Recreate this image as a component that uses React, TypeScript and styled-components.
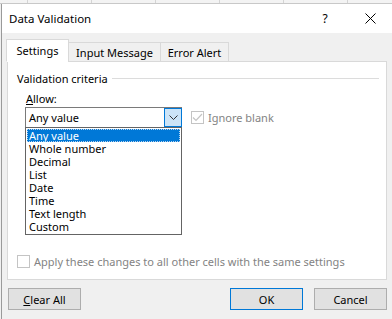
import React from 'react';
import styled, { createGlobalStyle } from 'styled-components';

const GlobalStyle = createGlobalStyle`
  html, body {
    margin: 0;
    padding: 0;
    background: #f0f0f0;
  }
  body {
    font-family: "Segoe UI", "Noto Sans", "Liberation Sans", sans-serif;
    font-size: 11px;
    color: #000;
  }
`;

const Page = styled.div`
  width: 392px;
  height: 319px;
  overflow: hidden;
  display: flex;
  flex-direction: column;
`;

const SheetStrip = styled.div`
  height: 3px;
  background: #f3f3f3;
  background-image: repeating-linear-gradient(90deg, transparent 0 27px, #d4d4d4 27px 28px, transparent 28px 64px);
  border-bottom: 1px solid #c8c8c8;
`;

const Dialog = styled.div`
  flex: 1;
  display: flex;
  flex-direction: column;
  border-left: 1px solid #9a9a9a;
  margin-left: 1px;
  background: #f0f0f0;
`;

const TitleBar = styled.div`
  height: 29px;
  background: #fff;
  display: flex;
  align-items: center;
  padding-left: 7px;
`;

const Title = styled.div`
  flex: 1;
  font-size: 11.5px;
  margin-top: -1px;
`;

const TitleButton = styled.div<{ $w: number }>`
  width: ${p => p.$w}px;
  height: 29px;
  display: flex;
  align-items: center;
  justify-content: center;
  font-size: 12px;
`;

const Body = styled.div`
  flex: 1;
  display: flex;
  flex-direction: column;
  padding: 7px 5px 0 4px;
`;

const Tabs = styled.div`
  display: flex;
  align-items: flex-end;
  height: 22px;
  position: relative;
  z-index: 1;
  margin-bottom: -1px;
`;

const Tab = styled.div<{ $active?: boolean; $w: number }>`
  width: ${p => p.$w}px;
  height: ${p => (p.$active ? 23 : 20)}px;
  display: flex;
  align-items: center;
  justify-content: center;
  background: ${p => (p.$active ? '#fff' : '#f0f0f0')};
  border: 1px solid #d9d9d9;
  border-bottom: ${p => (p.$active ? '1px solid #fff' : '1px solid #d9d9d9')};
  margin-left: ${p => (p.$active ? 0 : -1)}px;
  box-sizing: border-box;
  font-size: 11px;
`;

const Panel = styled.div`
  height: 219px;
  background: #fff;
  border: 1px solid #d9d9d9;
  box-sizing: border-box;
  margin-left: 1px;
  padding: 9px 7px 0 9px;
  display: flex;
  flex-direction: column;
  position: relative;
`;

const GroupHeader = styled.div`
  display: flex;
  align-items: center;
  gap: 4px;
  height: 14px;
`;

const GroupRule = styled.div`
  flex: 1;
  height: 1px;
  background: #dcdcdc;
`;

const FieldLabel = styled.div`
  margin: 6px 0 0 9px;
  height: 15px;
  line-height: 15px;
  u { text-decoration: underline; }
`;

const ComboRow = styled.div`
  display: flex;
  align-items: center;
  margin: 1px 0 0 8px;
  gap: 9px;
`;

const ComboWrap = styled.div`
  position: relative;
  width: 157px;
`;

const Combo = styled.div`
  width: 157px;
  height: 20px;
  box-sizing: border-box;
  border: 1px solid #7a7a7a;
  border-bottom: none;
  display: flex;
  align-items: center;
  padding-left: 3px;
  background: #fff;
`;

const ComboText = styled.div`
  flex: 1;
`;

const ArrowButton = styled.div`
  width: 18px;
  height: 19px;
  box-sizing: border-box;
  border: 1px solid #0078d7;
  background: #cce4f7;
  display: flex;
  align-items: center;
  justify-content: center;
  margin-right: -1px;
`;

const DropList = styled.div`
  position: absolute;
  left: 0;
  top: 20px;
  width: 157px;
  box-sizing: border-box;
  border: 1px solid #646464;
  background: #fff;
  padding: 1px 0 1px 1px;
  z-index: 2;
`;

const Option = styled.div<{ $selected?: boolean }>`
  height: 13px;
  line-height: 13px;
  padding-left: 2px;
  margin-right: 1px;
  box-sizing: border-box;
  background: ${p => (p.$selected ? '#0078d7' : 'transparent')};
  color: ${p => (p.$selected ? '#fff' : '#000')};
  outline: ${p => (p.$selected ? '1px dotted #b8d4ee' : 'none')};
  outline-offset: -1px;
`;

const CheckLine = styled.div`
  display: flex;
  align-items: center;
  gap: 4px;
  color: #838383;
`;

const CheckBox = styled.div`
  width: 13px;
  height: 13px;
  box-sizing: border-box;
  border: 1px solid #c4c4c4;
  background: #fff;
  display: flex;
  align-items: center;
  justify-content: center;
`;

const Spacer = styled.div`
  flex: 1;
`;

const ApplyRow = styled.div`
  margin: 0 0 10px 0;
`;

const Footer = styled.div`
  display: flex;
  align-items: center;
  padding: 8px 0 0 2px;
  gap: 11px;
`;

const Button = styled.div<{ $default?: boolean }>`
  width: 73px;
  height: 22px;
  box-sizing: border-box;
  background: #e1e1e1;
  border: 1px solid ${p => (p.$default ? '#0078d7' : '#adadad')};
  display: flex;
  align-items: center;
  justify-content: center;
  u { text-decoration: underline; }
`;

const FooterGap = styled.div`
  flex: 1;
`;

const options = ['Any value', 'Whole number', 'Decimal', 'List', 'Date', 'Time', 'Text length', 'Custom'];

export default function App() {
  return (
    <Page>
      <GlobalStyle />
      <SheetStrip />
      <Dialog>
        <TitleBar>
          <Title>Data Validation</Title>
          <TitleButton $w={46}>?</TitleButton>
          <TitleButton $w={44}>
            <svg width="11" height="11" viewBox="0 0 11 11">
              <path d="M0.5 0.5 L10.5 10.5 M10.5 0.5 L0.5 10.5" stroke="#000" strokeWidth="1" fill="none" />
            </svg>
          </TitleButton>
        </TitleBar>
        <Body>
          <Tabs>
            <Tab $active $w={63}>Settings</Tab>
            <Tab $w={93}>Input Message</Tab>
            <Tab $w={69}>Error Alert</Tab>
          </Tabs>
          <Panel>
            <GroupHeader>
              <span>Validation criteria</span>
              <GroupRule />
            </GroupHeader>
            <FieldLabel><u>A</u>llow:</FieldLabel>
            <ComboRow>
              <ComboWrap>
                <Combo>
                  <ComboText>Any value</ComboText>
                  <ArrowButton>
                    <svg width="9" height="5" viewBox="0 0 9 5">
                      <path d="M0.5 0.5 L4.5 4.5 L8.5 0.5" stroke="#333" strokeWidth="1" fill="none" />
                    </svg>
                  </ArrowButton>
                </Combo>
                <DropList>
                  {options.map((o, i) => (
                    <Option key={o} $selected={i === 0}>{o}</Option>
                  ))}
                </DropList>
              </ComboWrap>
              <CheckLine>
                <CheckBox>
                  <svg width="11" height="9" viewBox="0 0 11 9">
                    <path d="M1 4.5 L4 7.5 L10 1" stroke="#c4c4c4" strokeWidth="1.2" fill="none" />
                  </svg>
                </CheckBox>
                <span>Ignore blank</span>
              </CheckLine>
            </ComboRow>
            <Spacer />
            <ApplyRow>
              <CheckLine>
                <CheckBox />
                <span>Apply these changes to all other cells with the same settings</span>
              </CheckLine>
            </ApplyRow>
          </Panel>
          <Footer>
            <Button><span><u>C</u>lear All</span></Button>
            <FooterGap />
            <Button $default>OK</Button>
            <Button>Cancel</Button>
          </Footer>
        </Body>
      </Dialog>
    </Page>
  );
}
